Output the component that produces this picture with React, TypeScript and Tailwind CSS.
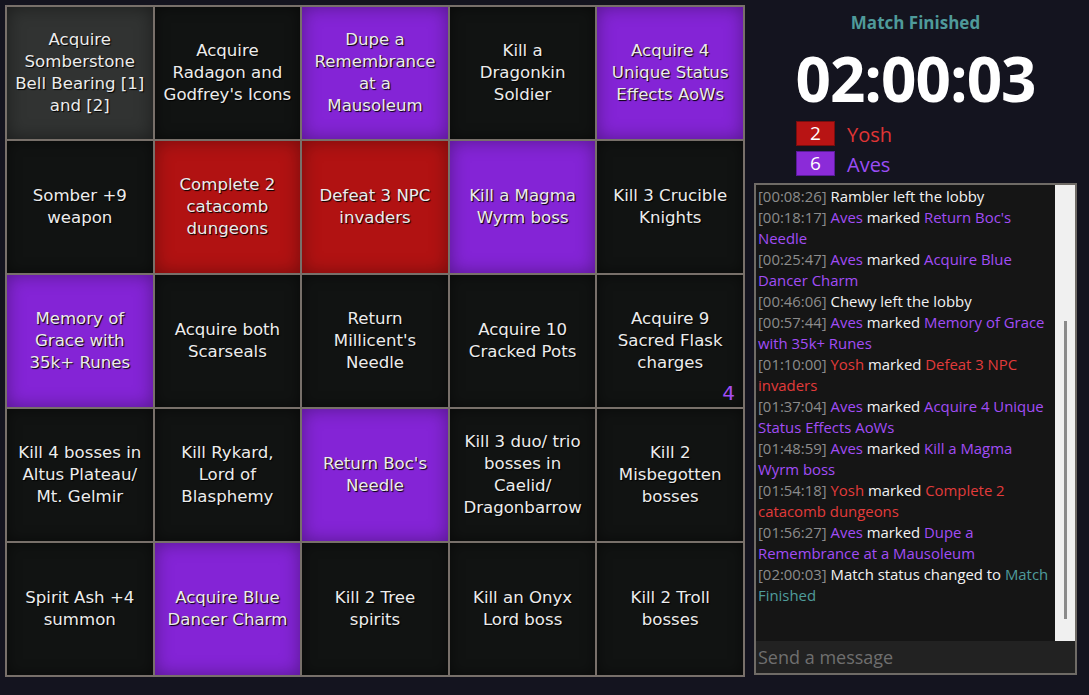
import React from "react";

type Cell = { lines: string[]; state?: "red" | "purple" | "hover"; count?: number };

const cells: Cell[] = [
  { lines: ["Acquire", "Somberstone", "Bell Bearing [1]", "and [2]"], state: "hover" },
  { lines: ["Acquire", "Radagon and", "Godfrey's Icons"] },
  { lines: ["Dupe a", "Remembrance", "at a", "Mausoleum"], state: "purple" },
  { lines: ["Kill a", "Dragonkin", "Soldier"] },
  { lines: ["Acquire 4", "Unique Status", "Effects AoWs"], state: "purple" },
  { lines: ["Somber +9", "weapon"] },
  { lines: ["Complete 2", "catacomb", "dungeons"], state: "red" },
  { lines: ["Defeat 3 NPC", "invaders"], state: "red" },
  { lines: ["Kill a Magma", "Wyrm boss"], state: "purple" },
  { lines: ["Kill 3 Crucible", "Knights"] },
  { lines: ["Memory of", "Grace with", "35k+ Runes"], state: "purple" },
  { lines: ["Acquire both", "Scarseals"] },
  { lines: ["Return", "Millicent's", "Needle"] },
  { lines: ["Acquire 10", "Cracked Pots"] },
  { lines: ["Acquire 9", "Sacred Flask", "charges"], count: 4 },
  { lines: ["Kill 4 bosses in", "Altus Plateau/", "Mt. Gelmir"] },
  { lines: ["Kill Rykard,", "Lord of", "Blasphemy"] },
  { lines: ["Return Boc's", "Needle"], state: "purple" },
  { lines: ["Kill 3 duo/ trio", "bosses in", "Caelid/", "Dragonbarrow"] },
  { lines: ["Kill 2", "Misbegotten", "bosses"] },
  { lines: ["Spirit Ash +4", "summon"] },
  { lines: ["Acquire Blue", "Dancer Charm"], state: "purple" },
  { lines: ["Kill 2 Tree", "spirits"] },
  { lines: ["Kill an Onyx", "Lord boss"] },
  { lines: ["Kill 2 Troll", "bosses"] },
];

type Part = { t: string; c?: "ts" | "yosh" | "aves" | "teal" };
const messages: Part[][] = [
  [{ t: "[00:08:26]", c: "ts" }, { t: " Rambler left the lobby" }],
  [{ t: "[00:18:17]", c: "ts" }, { t: " " }, { t: "Aves", c: "aves" }, { t: " marked " }, { t: "Return Boc's Needle", c: "aves" }],
  [{ t: "[00:25:47]", c: "ts" }, { t: " " }, { t: "Aves", c: "aves" }, { t: " marked " }, { t: "Acquire Blue Dancer Charm", c: "aves" }],
  [{ t: "[00:46:06]", c: "ts" }, { t: " Chewy left the lobby" }],
  [{ t: "[00:57:44]", c: "ts" }, { t: " " }, { t: "Aves", c: "aves" }, { t: " marked " }, { t: "Memory of Grace with 35k+ Runes", c: "aves" }],
  [{ t: "[01:10:00]", c: "ts" }, { t: " " }, { t: "Yosh", c: "yosh" }, { t: " marked " }, { t: "Defeat 3 NPC invaders", c: "yosh" }],
  [{ t: "[01:37:04]", c: "ts" }, { t: " " }, { t: "Aves", c: "aves" }, { t: " marked " }, { t: "Acquire 4 Unique Status Effects AoWs", c: "aves" }],
  [{ t: "[01:48:59]", c: "ts" }, { t: " " }, { t: "Aves", c: "aves" }, { t: " marked " }, { t: "Kill a Magma Wyrm boss", c: "aves" }],
  [{ t: "[01:54:18]", c: "ts" }, { t: " " }, { t: "Yosh", c: "yosh" }, { t: " marked " }, { t: "Complete 2 catacomb dungeons", c: "yosh" }],
  [{ t: "[01:56:27]", c: "ts" }, { t: " " }, { t: "Aves", c: "aves" }, { t: " marked " }, { t: "Dupe a Remembrance at a Mausoleum", c: "aves" }],
  [{ t: "[02:00:03]", c: "ts" }, { t: " Match status changed to " }, { t: "Match Finished", c: "teal" }],
];

const partColor: Record<string, string> = {
  ts: "text-[#8c8c8c]",
  yosh: "text-[#e23b3b]",
  aves: "text-[#a24df5]",
  teal: "text-[#4f9c9c]",
};

function BoardCell({ cell }: { cell: Cell }) {
  const bg =
    cell.state === "red"
      ? "bg-[#b11212] shadow-[inset_0_0_18px_rgba(0,0,0,0.35)]"
      : cell.state === "purple"
      ? "bg-[#8424d6] shadow-[inset_0_0_18px_rgba(0,0,0,0.35)]"
      : cell.state === "hover"
      ? "bg-[#313332] shadow-[inset_0_0_18px_rgba(0,0,0,0.45)]"
      : "bg-[#111312] shadow-[inset_0_0_14px_rgba(0,0,0,0.5)]";
  return (
    <div className={`relative flex flex-col items-center justify-center text-center ${bg}`}>
      {cell.lines.map((l, i) => (
        <span
          key={i}
          className="whitespace-nowrap text-[16.6px] leading-[22px] text-[#ececec] [text-shadow:1px_1px_1px_#000]"
        >
          {l}
        </span>
      ))}
      {cell.count !== undefined && (
        <span className="absolute bottom-[2px] right-[8px] text-[20px] leading-[24px] text-[#a24df5]">
          {cell.count}
        </span>
      )}
    </div>
  );
}

export default function App() {
  return (
    <div className="flex h-[695px] w-[1089px] bg-[#14141f] pl-[5px] pt-[5px] font-['DejaVu_Sans',sans-serif]">
      <div className="grid h-[672px] w-[740px] grid-cols-5 grid-rows-5 gap-[2px] bg-[#78706a] p-[2px]">
        {cells.map((c, i) => (
          <BoardCell key={i} cell={c} />
        ))}
      </div>

      <div className="ml-[9px] flex w-[323px] flex-col font-['Open_Sans',sans-serif]">
        <div className="pt-[5px] text-center text-[17px] font-bold leading-[26px] text-[#4f9a9a]">
          Match Finished
        </div>
        <div className="mt-[6px] text-center text-[62px] font-bold leading-[72px] tracking-[-1px] text-white">
          02:00:03
        </div>
        <div className="mt-[7px] flex flex-col gap-[5px] pl-[42px]">
          <div className="flex h-[25px] items-center gap-[12px]">
            <div className="flex h-[25px] w-[39px] items-center justify-center border border-[#7a0e0e] bg-[#b81414] text-[19px] leading-none text-white">
              2
            </div>
            <span className="relative top-[1px] text-[20px] leading-[25px] text-[#e03535]">Yosh</span>
          </div>
          <div className="flex h-[25px] items-center gap-[12px]">
            <div className="flex h-[25px] w-[39px] items-center justify-center border border-[#5a1c9a] bg-[#8b2bd8] text-[19px] leading-none text-white">
              6
            </div>
            <span className="relative top-[1px] text-[20px] leading-[25px] text-[#9b4df5]">Aves</span>
          </div>
        </div>

        <div className="mt-[7px] flex h-[492px] flex-col border-2 border-[#6f6b66] bg-[#151515]">
          <div className="flex min-h-0 flex-1">
            <div className="flex-1 overflow-hidden pl-[2px] pt-[1px] text-[14.9px] leading-[21px] text-[#f2f2f2]">
              {messages.map((m, i) => (
                <div key={i}>
                  {m.map((p, j) => (
                    <span key={j} className={p.c ? partColor[p.c] : ""}>
                      {p.t}
                    </span>
                  ))}
                </div>
              ))}
            </div>
            <div className="flex w-[20px] justify-center bg-[#f0f0f0] pt-[136px]">
              <div className="h-[298px] w-[3px] bg-[#8a8a8a]" />
            </div>
          </div>
          <div className="h-[32px] bg-[#222222] pl-[2px] text-[18px] leading-[32px] text-[#6f6f6f]">
            Send a message
          </div>
        </div>
      </div>
    </div>
  );
}
